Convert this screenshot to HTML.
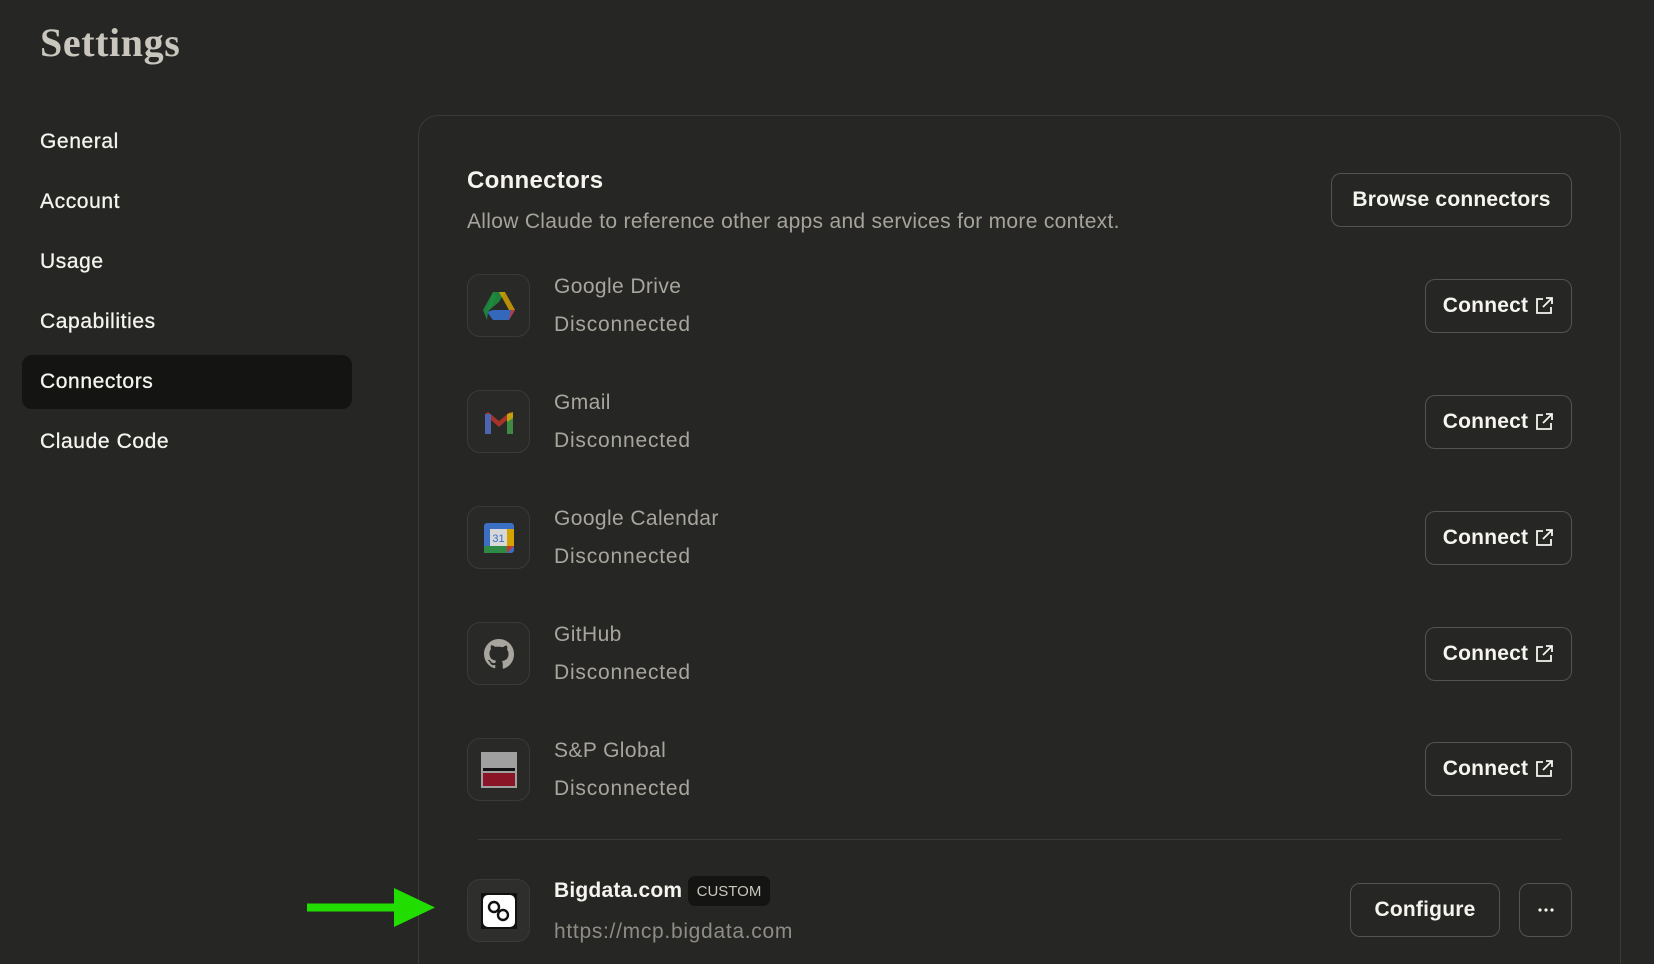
<!DOCTYPE html>
<html><head><meta charset="utf-8"><style>
*{margin:0;padding:0;box-sizing:border-box}
html{width:1654px;height:964px;overflow:hidden}
body{width:1654px;height:964px;background:#262624;font-family:"Liberation Sans",sans-serif;color:#f5f4ef;position:relative;overflow:hidden}
.abs{position:absolute}
.title{left:40px;top:19px;font-family:"Liberation Serif",serif;font-size:40px;font-weight:bold;color:#c9c6bd;letter-spacing:0.6px}
.nav{left:40px;font-size:21px;color:#f5f4ef;line-height:28px;letter-spacing:0.6px;-webkit-text-stroke:0.3px #f5f4ef}
.active{left:22px;top:355px;width:330px;height:54px;background:#141413;border-radius:10px}
.panel{left:418px;top:115px;width:1203px;height:849px;border:1px solid #3a3a37;border-bottom:none;border-radius:20px 20px 0 0}
.h{left:467px;top:167px;font-size:24px;font-weight:bold;letter-spacing:0.3px}
.sub{left:467px;top:210px;font-size:21px;color:#a6a39b;letter-spacing:0.3px}
.btn{border:1px solid #545350;border-radius:10px;font-size:21px;font-weight:bold;color:#f5f4ef;display:flex;align-items:center;justify-content:center;background:#262624;letter-spacing:0.2px}
.icon{left:467px;width:63px;height:63px;border:1px solid #3a3a37;border-radius:13px;background:#292927;display:flex;align-items:center;justify-content:center}
.name{left:554px;font-size:21px;color:#a8a59e;letter-spacing:0.4px}
.stat{left:554px;font-size:21px;color:#a8a59e;letter-spacing:0.8px}
</style></head><body>
<div class="abs title">Settings</div>
<div class="abs active"></div>
<div class="abs nav" style="top:128px">General</div>
<div class="abs nav" style="top:188px">Account</div>
<div class="abs nav" style="top:248px">Usage</div>
<div class="abs nav" style="top:308px">Capabilities</div>
<div class="abs nav" style="top:368px">Connectors</div>
<div class="abs nav" style="top:428px">Claude Code</div>

<div class="abs panel"></div>
<div class="abs h">Connectors</div>
<div class="abs sub">Allow Claude to reference other apps and services for more context.</div>
<div class="abs btn" style="left:1331px;top:173px;width:241px;height:54px">Browse connectors</div>

<div class="abs icon" style="top:274px"><svg width="34" height="30" viewBox="0 0 34 30"><polygon points="11,1 23,1 17,11 5,21" fill="#1e8e3e" opacity=".85"/><polygon points="23,1 33,19 27,19 17,1" fill="#e0a800" opacity=".8"/><polygon points="5,21 11,29 27,29 33,19 11,19" fill="#3673d6" opacity=".85"/><polygon points="1,19 11,1 14,6 6,21 5,29" fill="#1e8e3e" opacity=".85"/><polygon points="27,29 33,19 29,19" fill="#d93025" opacity=".8"/></svg></div>
<div class="abs name" style="top:275px">Google Drive</div>
<div class="abs stat" style="top:313px">Disconnected</div>
<div class="abs btn" style="left:1425px;top:279px;width:147px;height:54px">Connect&nbsp;<svg width="20" height="20" viewBox="0 0 20 20" fill="none" stroke="#f5f4ef" stroke-width="1.8"><path d="M9 3H3v14h14v-6M12 2h6v6M18 2l-9 9"/></svg></div>

<div class="abs icon" style="top:390px"><svg width="32" height="24" viewBox="0 0 32 24"><path d="M2 4v20h6V10l8 7 8-7v14h6V4l-3-2-11 9L5 2z" fill="#c5362c" opacity=".8"/><rect x="2" y="4" width="6" height="20" fill="#3d6fc9" opacity=".85"/><rect x="24" y="4" width="6" height="20" fill="#2b9a48" opacity=".85"/><path d="M24 4l6 -2v6l-6 4z" fill="#e0a800" opacity=".8"/></svg></div>
<div class="abs name" style="top:391px">Gmail</div>
<div class="abs stat" style="top:429px">Disconnected</div>
<div class="abs btn" style="left:1425px;top:395px;width:147px;height:54px">Connect&nbsp;<svg width="20" height="20" viewBox="0 0 20 20" fill="none" stroke="#f5f4ef" stroke-width="1.8"><path d="M9 3H3v14h14v-6M12 2h6v6M18 2l-9 9"/></svg></div>

<div class="abs icon" style="top:506px"><svg width="30" height="30" viewBox="0 0 30 30"><rect x="0" y="0" width="30" height="30" rx="3" fill="#3a6fc4"/><rect x="23" y="6" width="7" height="17" fill="#d4a300"/><rect x="0" y="23" width="23" height="7" fill="#2e8a45"/><polygon points="23,23 30,23 23,30" fill="#c5362c"/><rect x="6" y="6" width="17" height="17" fill="#d8d8d8"/><text x="14.5" y="19" font-size="11" font-family="Liberation Sans" fill="#3a6fc4" text-anchor="middle">31</text></svg></div>
<div class="abs name" style="top:507px">Google Calendar</div>
<div class="abs stat" style="top:545px">Disconnected</div>
<div class="abs btn" style="left:1425px;top:511px;width:147px;height:54px">Connect&nbsp;<svg width="20" height="20" viewBox="0 0 20 20" fill="none" stroke="#f5f4ef" stroke-width="1.8"><path d="M9 3H3v14h14v-6M12 2h6v6M18 2l-9 9"/></svg></div>

<div class="abs icon" style="top:622px"><svg width="30" height="30" viewBox="0 0 16 16"><path fill="#a8a59e" d="M8 0C3.58 0 0 3.58 0 8c0 3.54 2.29 6.53 5.47 7.59.4.07.55-.17.55-.38v-1.33c-2.23.48-2.7-1.07-2.7-1.07-.36-.92-.89-1.17-.89-1.17-.73-.5.05-.49.05-.49.8.06 1.23.83 1.23.83.71 1.22 1.87.87 2.33.66.07-.52.28-.87.5-1.07-1.78-.2-3.64-.89-3.64-3.95 0-.87.31-1.59.82-2.15-.08-.2-.36-1.02.08-2.12 0 0 .67-.21 2.2.82A7.6 7.6 0 0 1 8 4.1c.68 0 1.36.09 2 .27 1.53-1.04 2.2-.82 2.2-.82.44 1.1.16 1.92.08 2.12.51.56.82 1.27.82 2.15 0 3.07-1.87 3.75-3.65 3.95.29.25.54.73.54 1.48v2.2c0 .21.15.46.55.38A8 8 0 0 0 16 8c0-4.42-3.58-8-8-8z"/></svg></div>
<div class="abs name" style="top:623px">GitHub</div>
<div class="abs stat" style="top:661px">Disconnected</div>
<div class="abs btn" style="left:1425px;top:627px;width:147px;height:54px">Connect&nbsp;<svg width="20" height="20" viewBox="0 0 20 20" fill="none" stroke="#f5f4ef" stroke-width="1.8"><path d="M9 3H3v14h14v-6M12 2h6v6M18 2l-9 9"/></svg></div>

<div class="abs icon" style="top:738px"><svg width="36" height="36" viewBox="0 0 36 36"><rect width="36" height="36" fill="#a0a0a0"/><rect x="2" y="16" width="32" height="3" fill="#111"/><rect x="2" y="21" width="32" height="13" fill="#8a1527"/></svg></div>
<div class="abs name" style="top:739px">S&amp;P Global</div>
<div class="abs stat" style="top:777px">Disconnected</div>
<div class="abs btn" style="left:1425px;top:742px;width:147px;height:54px">Connect&nbsp;<svg width="20" height="20" viewBox="0 0 20 20" fill="none" stroke="#f5f4ef" stroke-width="1.8"><path d="M9 3H3v14h14v-6M12 2h6v6M18 2l-9 9"/></svg></div>

<div class="abs" style="left:478px;top:839px;width:1083px;height:1px;background:#3a3a37"></div>

<div class="abs icon" style="top:879px;background:#2e2e2c"><svg width="36" height="36" viewBox="0 0 36 36"><rect width="36" height="36" fill="#111"/><rect x="2" y="2" width="32" height="32" rx="5" fill="#fff"/><circle cx="13" cy="14" r="5" fill="none" stroke="#111" stroke-width="2.4"/><circle cx="22" cy="22" r="5" fill="none" stroke="#111" stroke-width="2.4"/></svg></div>
<div class="abs" style="left:554px;top:879px;font-size:21px;font-weight:bold;color:#f5f4ef;letter-spacing:0.2px">Bigdata.com</div>
<div class="abs" style="left:688px;top:876px;width:82px;height:30px;background:#141413;border-radius:7px;font-size:15px;color:#c9c6bd;display:flex;align-items:center;justify-content:center">CUSTOM</div>
<div class="abs" style="left:554px;top:920px;font-size:21px;color:#8f8c86;letter-spacing:0.7px">https://mcp.bigdata.com</div>
<div class="abs btn" style="left:1350px;top:883px;width:150px;height:54px">Configure</div>
<div class="abs btn" style="left:1519px;top:883px;width:53px;height:54px"><svg width="18" height="4"><circle cx="3" cy="2" r="1.6" fill="#f5f4ef"/><circle cx="9" cy="2" r="1.6" fill="#f5f4ef"/><circle cx="15" cy="2" r="1.6" fill="#f5f4ef"/></svg></div>

<svg class="abs" style="left:300px;top:880px" width="140" height="55"><rect x="7" y="23.5" width="90" height="8" fill="#22dd00"/><polygon points="94,8 135,27.5 94,47" fill="#22dd00"/></svg>
</body></html>
